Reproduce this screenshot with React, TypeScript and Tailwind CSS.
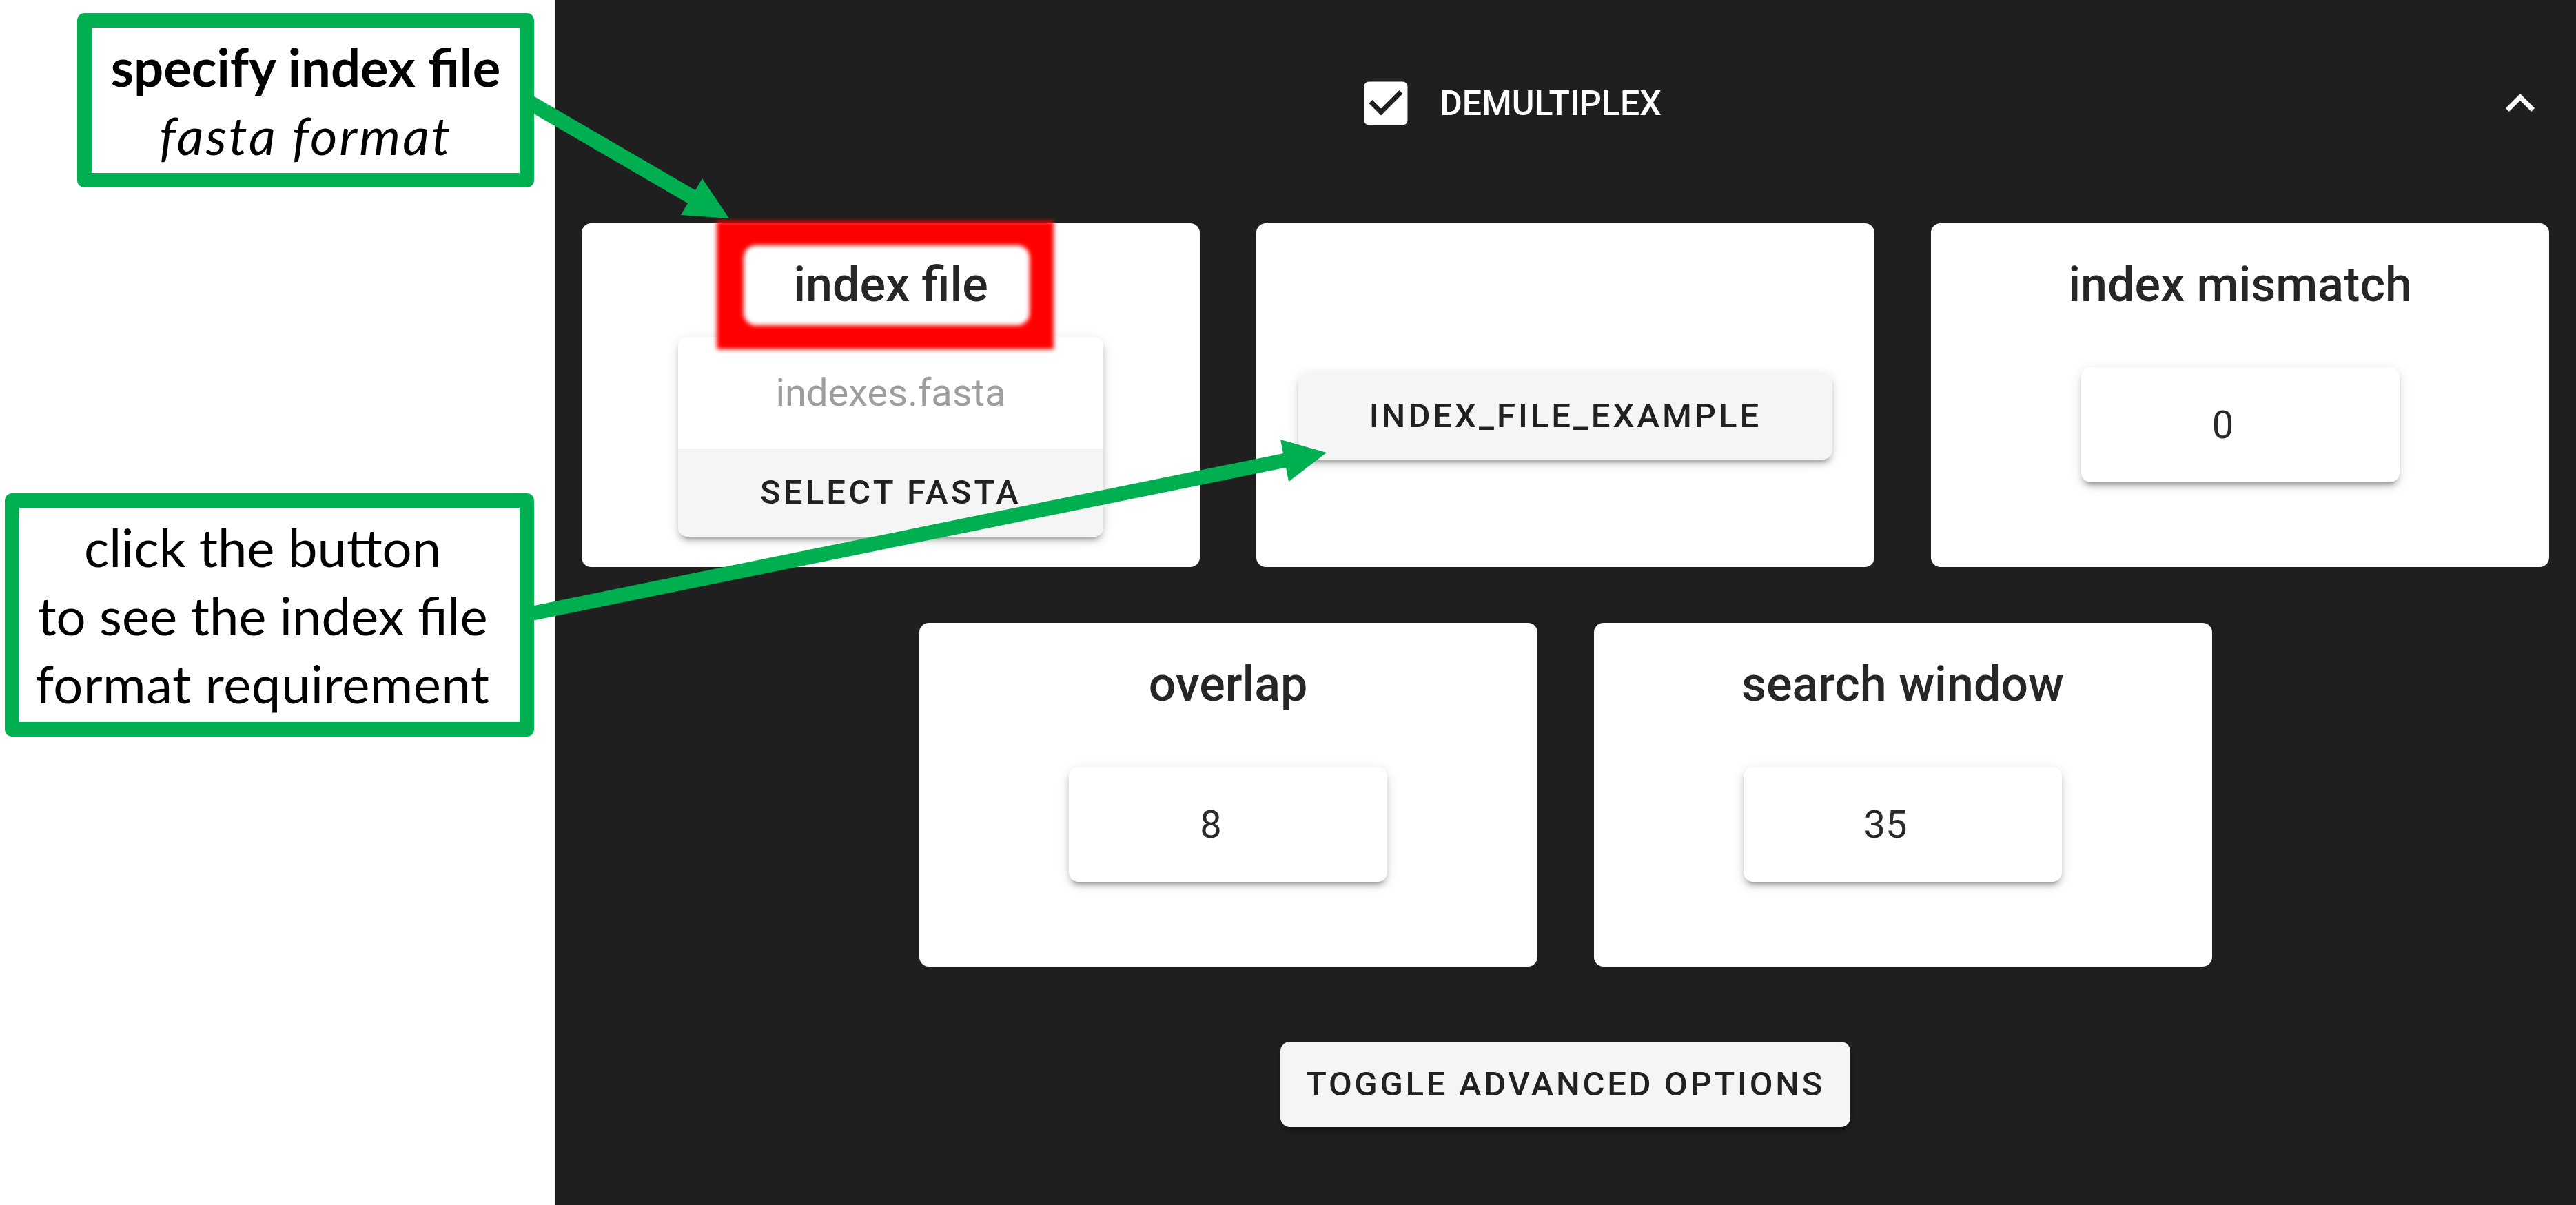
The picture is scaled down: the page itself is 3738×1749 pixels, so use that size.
import React from "react";

const shadow2 =
  "shadow-[0_10px_4px_-7px_rgba(0,0,0,0.2),0_7px_7px_0_rgba(0,0,0,0.14),0_4px_18px_0_rgba(0,0,0,0.12)]";

function Card({ children, className = "" }: { children: React.ReactNode; className?: string }) {
  return (
    <div
      className={
        "relative w-[897px] h-[499px] bg-white rounded-[14px] flex flex-col items-center " + className
      }
    >
      {children}
    </div>
  );
}

function Title({ text }: { text: string }) {
  return (
    <div className="relative z-20 h-[84px] text-[70px] leading-[84px] font-medium text-[#262626] whitespace-nowrap">
      {text}
    </div>
  );
}

function NumberBox({ value }: { value: string }) {
  return (
    <div
      className={
        "mt-[78px] w-[462px] h-[167px] bg-white rounded-[14px] flex items-center justify-center pr-[50px] text-[56px] text-[#2a2a2a] " +
        shadow2
      }
    >
      {value}
    </div>
  );
}

export default function App() {
  return (
    <div className="relative flex w-[3738px] h-[1749px] overflow-hidden bg-white">
      {/* left annotation column */}
      <div className="w-[805px] shrink-0 bg-white flex flex-col font-['Lato',sans-serif] text-black">
        <div className="ml-[112px] mt-[19px] w-[663px] h-[253px] rounded-[10px] bg-[#00b050] p-[21px]">
          <div className="w-full h-full bg-white flex flex-col items-center justify-center">
            <div className="text-[76px] leading-[99px] font-bold whitespace-nowrap">specify index file</div>
            <div className="text-[76px] leading-[99px] italic tracking-[3px] whitespace-nowrap">fasta format</div>
          </div>
        </div>
        <div className="ml-[7px] mt-[444px] w-[768px] h-[353px] rounded-[10px] bg-[#00b050] p-[21px]">
          <div className="w-full h-full bg-white flex flex-col items-center justify-center pr-[20px]">
            <div className="text-[76px] leading-[99px] whitespace-nowrap">click the button</div>
            <div className="text-[76px] leading-[99px] whitespace-nowrap">to see the index file</div>
            <div className="text-[76px] leading-[99px] tracking-[0.5px] whitespace-nowrap">format requirement</div>
          </div>
        </div>
      </div>

      {/* app panel */}
      <div className="flex-1 bg-[#1f1f1f] flex flex-col font-['Roboto',sans-serif]">
        <div className="h-[300px] flex items-center">
          <div className="flex-1 flex justify-center items-center pr-[40px]">
            <svg width="84" height="84" viewBox="0 0 24 24" className="shrink-0">
              <path
                fill="#ffffff"
                d="M19 3H5c-1.11 0-2 .9-2 2v14c0 1.1.89 2 2 2h14c1.11 0 2-.9 2-2V5c0-1.1-.89-2-2-2zm-9 14l-5-5 1.41-1.41L10 14.17l7.59-7.59L19 8l-9 9z"
              />
            </svg>
            <span className="ml-[36px] text-[50px] font-medium text-white uppercase whitespace-nowrap">
              Demultiplex
            </span>
          </div>
          <svg width="84" height="84" viewBox="0 0 24 24" className="shrink-0 mr-[39px]">
            <path fill="#ffffff" d="M12 8l-6 6 1.41 1.41L12 10.83l4.59 4.58L18 14z" />
          </svg>
        </div>

        <div className="mt-[24px] flex justify-center gap-[82px]">
          <Card className="pt-[47px]">
            <div className="absolute left-[196px] top-[-3px] w-[489px] h-[186px] bg-[#ff0000] blur-[3px] z-10 flex items-center justify-center">
              <div className="w-[415px] h-[116px] bg-white rounded-[18px] ml-[4px]" />
            </div>
            <Title text="index file" />
            <div className={"mt-[34px] w-[617px] h-[290px] rounded-[14px] overflow-hidden flex flex-col " + shadow2}>
              <div className="h-[162px] bg-white flex items-center justify-center text-[56px] text-[#9e9e9e]">
                indexes.fasta
              </div>
              <div className="h-[128px] bg-[#f5f5f5] flex items-center justify-center text-[49px] font-medium tracking-[4.2px] text-[#212121] uppercase">
                Select fasta
              </div>
            </div>
          </Card>
          <Card className="pt-[217px]">
            <div
              className={
                "w-[775px] h-[126px] rounded-[14px] bg-[#f5f5f5] flex items-center justify-center text-[49px] font-medium tracking-[4px] text-[#212121] " +
                shadow2
              }
            >
              INDEX_FILE_EXAMPLE
            </div>
          </Card>
          <Card className="pt-[47px]">
            <Title text="index mismatch" />
            <NumberBox value="0" />
          </Card>
        </div>

        <div className="mt-[81px] flex justify-center gap-[82px]">
          <Card className="pt-[47px]">
            <Title text="overlap" />
            <NumberBox value="8" />
          </Card>
          <Card className="pt-[47px]">
            <Title text="search window" />
            <NumberBox value="35" />
          </Card>
        </div>

        <div className="mt-[109px] flex justify-center">
          <div
            className={
              "w-[827px] h-[124px] rounded-[14px] bg-[#f5f5f5] flex items-center justify-center text-[49px] font-medium tracking-[3.7px] text-[#212121] uppercase whitespace-nowrap " +
              shadow2
            }
          >
            Toggle advanced options
          </div>
        </div>
      </div>

      {/* annotation arrows */}
      <svg
        className="absolute inset-0 pointer-events-none z-50"
        width="3738"
        height="1749"
        viewBox="0 0 3738 1749"
      >
        <line x1="765" y1="146.7" x2="1006" y2="287" stroke="#00b050" strokeWidth="22" />
        <polygon points="1019,259 1058,317 988,312" fill="#00b050" />
        <line x1="765" y1="891.7" x2="1866" y2="668" stroke="#00b050" strokeWidth="21" />
        <polygon points="1858,638 1925,657 1870,699" fill="#00b050" />
      </svg>
    </div>
  );
}
